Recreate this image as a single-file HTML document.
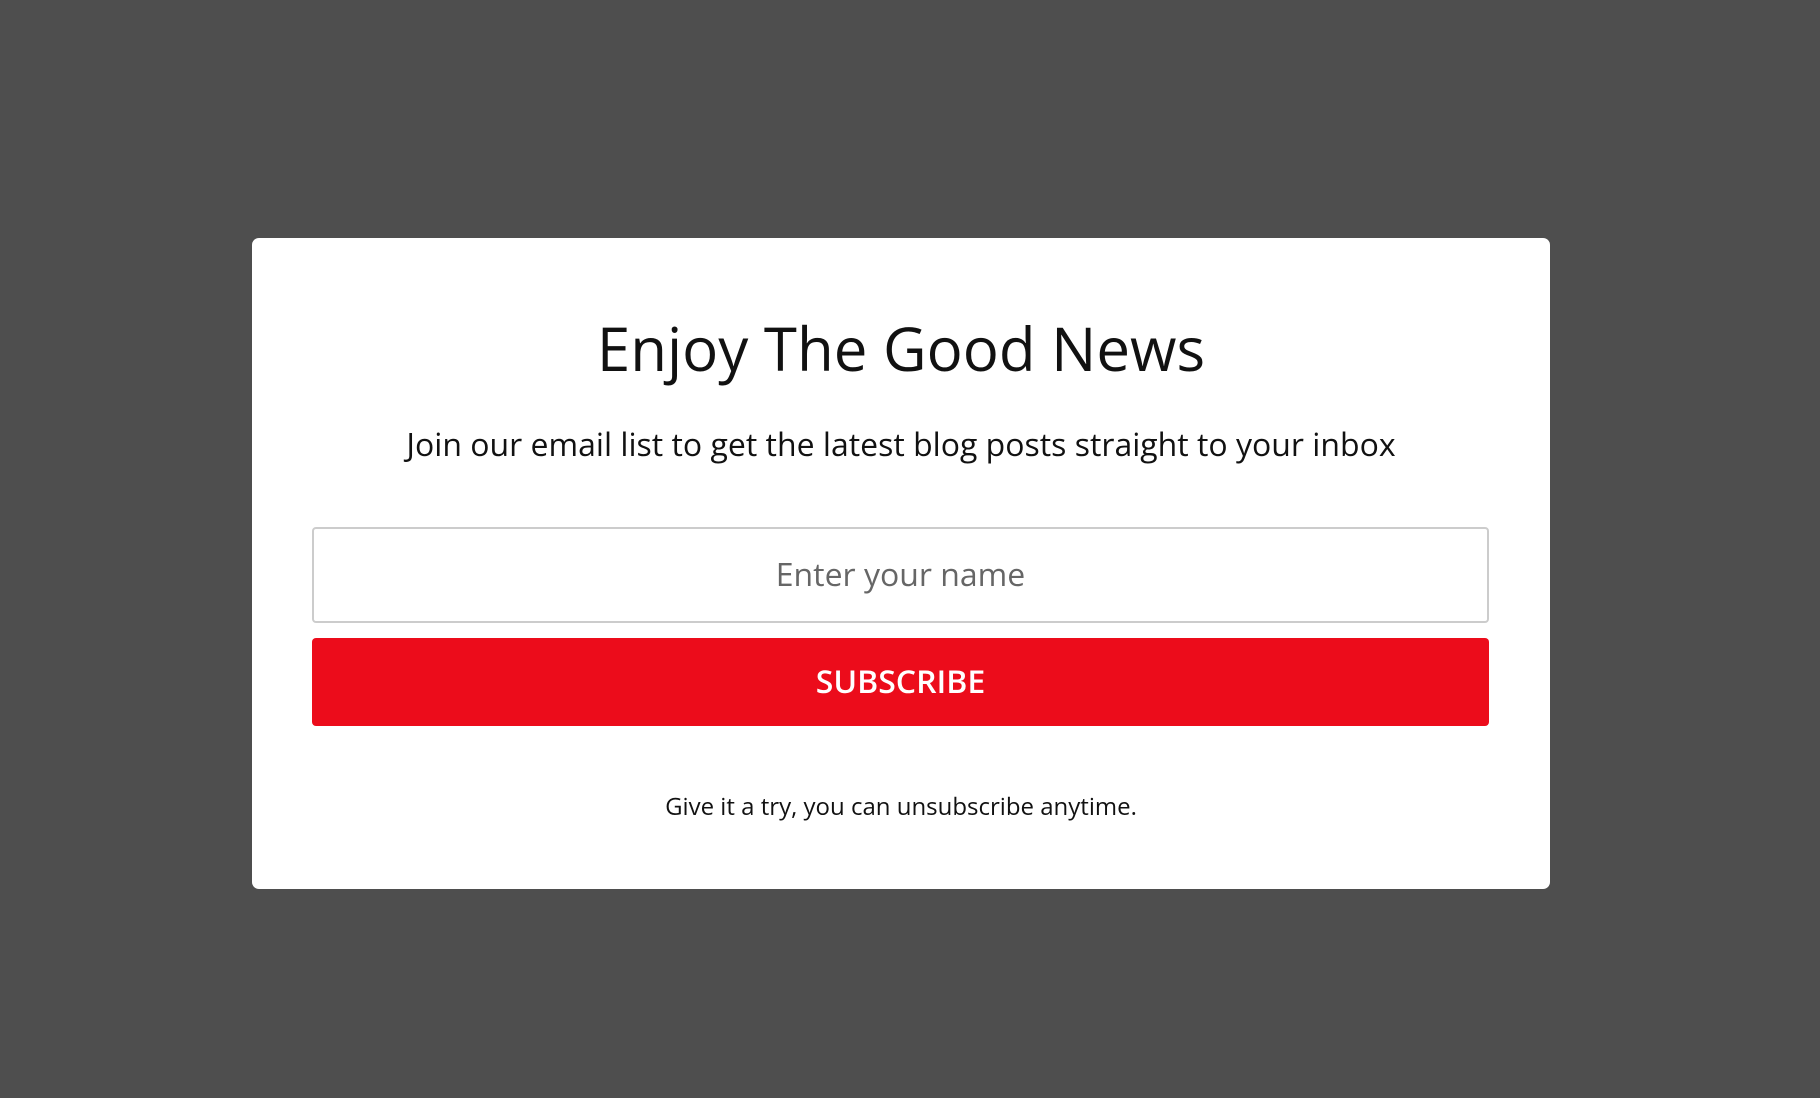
<!DOCTYPE html>
<html><head><meta charset="utf-8"><style>
html,body{margin:0;padding:0;width:1820px;height:1098px;background:#4e4e4e;overflow:hidden;font-family:"Open Sans","Liberation Sans",sans-serif;}
.card{position:absolute;left:252px;top:238px;width:1298px;height:651px;background:#fff;border-radius:7px;}
.t{position:absolute;left:252px;width:1298px;text-align:center;}
h1{top:308px;margin:0;font-weight:400;font-size:60px;color:#111;line-height:80px;}
.sub{top:423px;font-size:32px;color:#111;line-height:44px;}
.inp{position:absolute;left:312px;top:527px;width:1173px;height:92px;border:2px solid #ccc;border-radius:4px;background:#fff;text-align:center;line-height:92px;font-size:32px;color:#666;}
.btn{position:absolute;left:312px;top:638px;width:1177px;height:88px;background:#ec0c1b;border-radius:4px;color:#fff;font-weight:600;text-align:center;line-height:88px;font-size:32px;}
.foot{top:791px;font-size:24px;color:#111;line-height:32px;}
</style></head><body>
<div class="card"></div>
<h1 class="t">Enjoy The Good News</h1>
<div class="t sub">Join our email list to get the latest blog posts straight to your inbox</div>
<div class="inp">Enter your name</div>
<div class="btn">SUBSCRIBE</div>
<div class="t foot">Give it a try, you can unsubscribe anytime.</div>
</body></html>
